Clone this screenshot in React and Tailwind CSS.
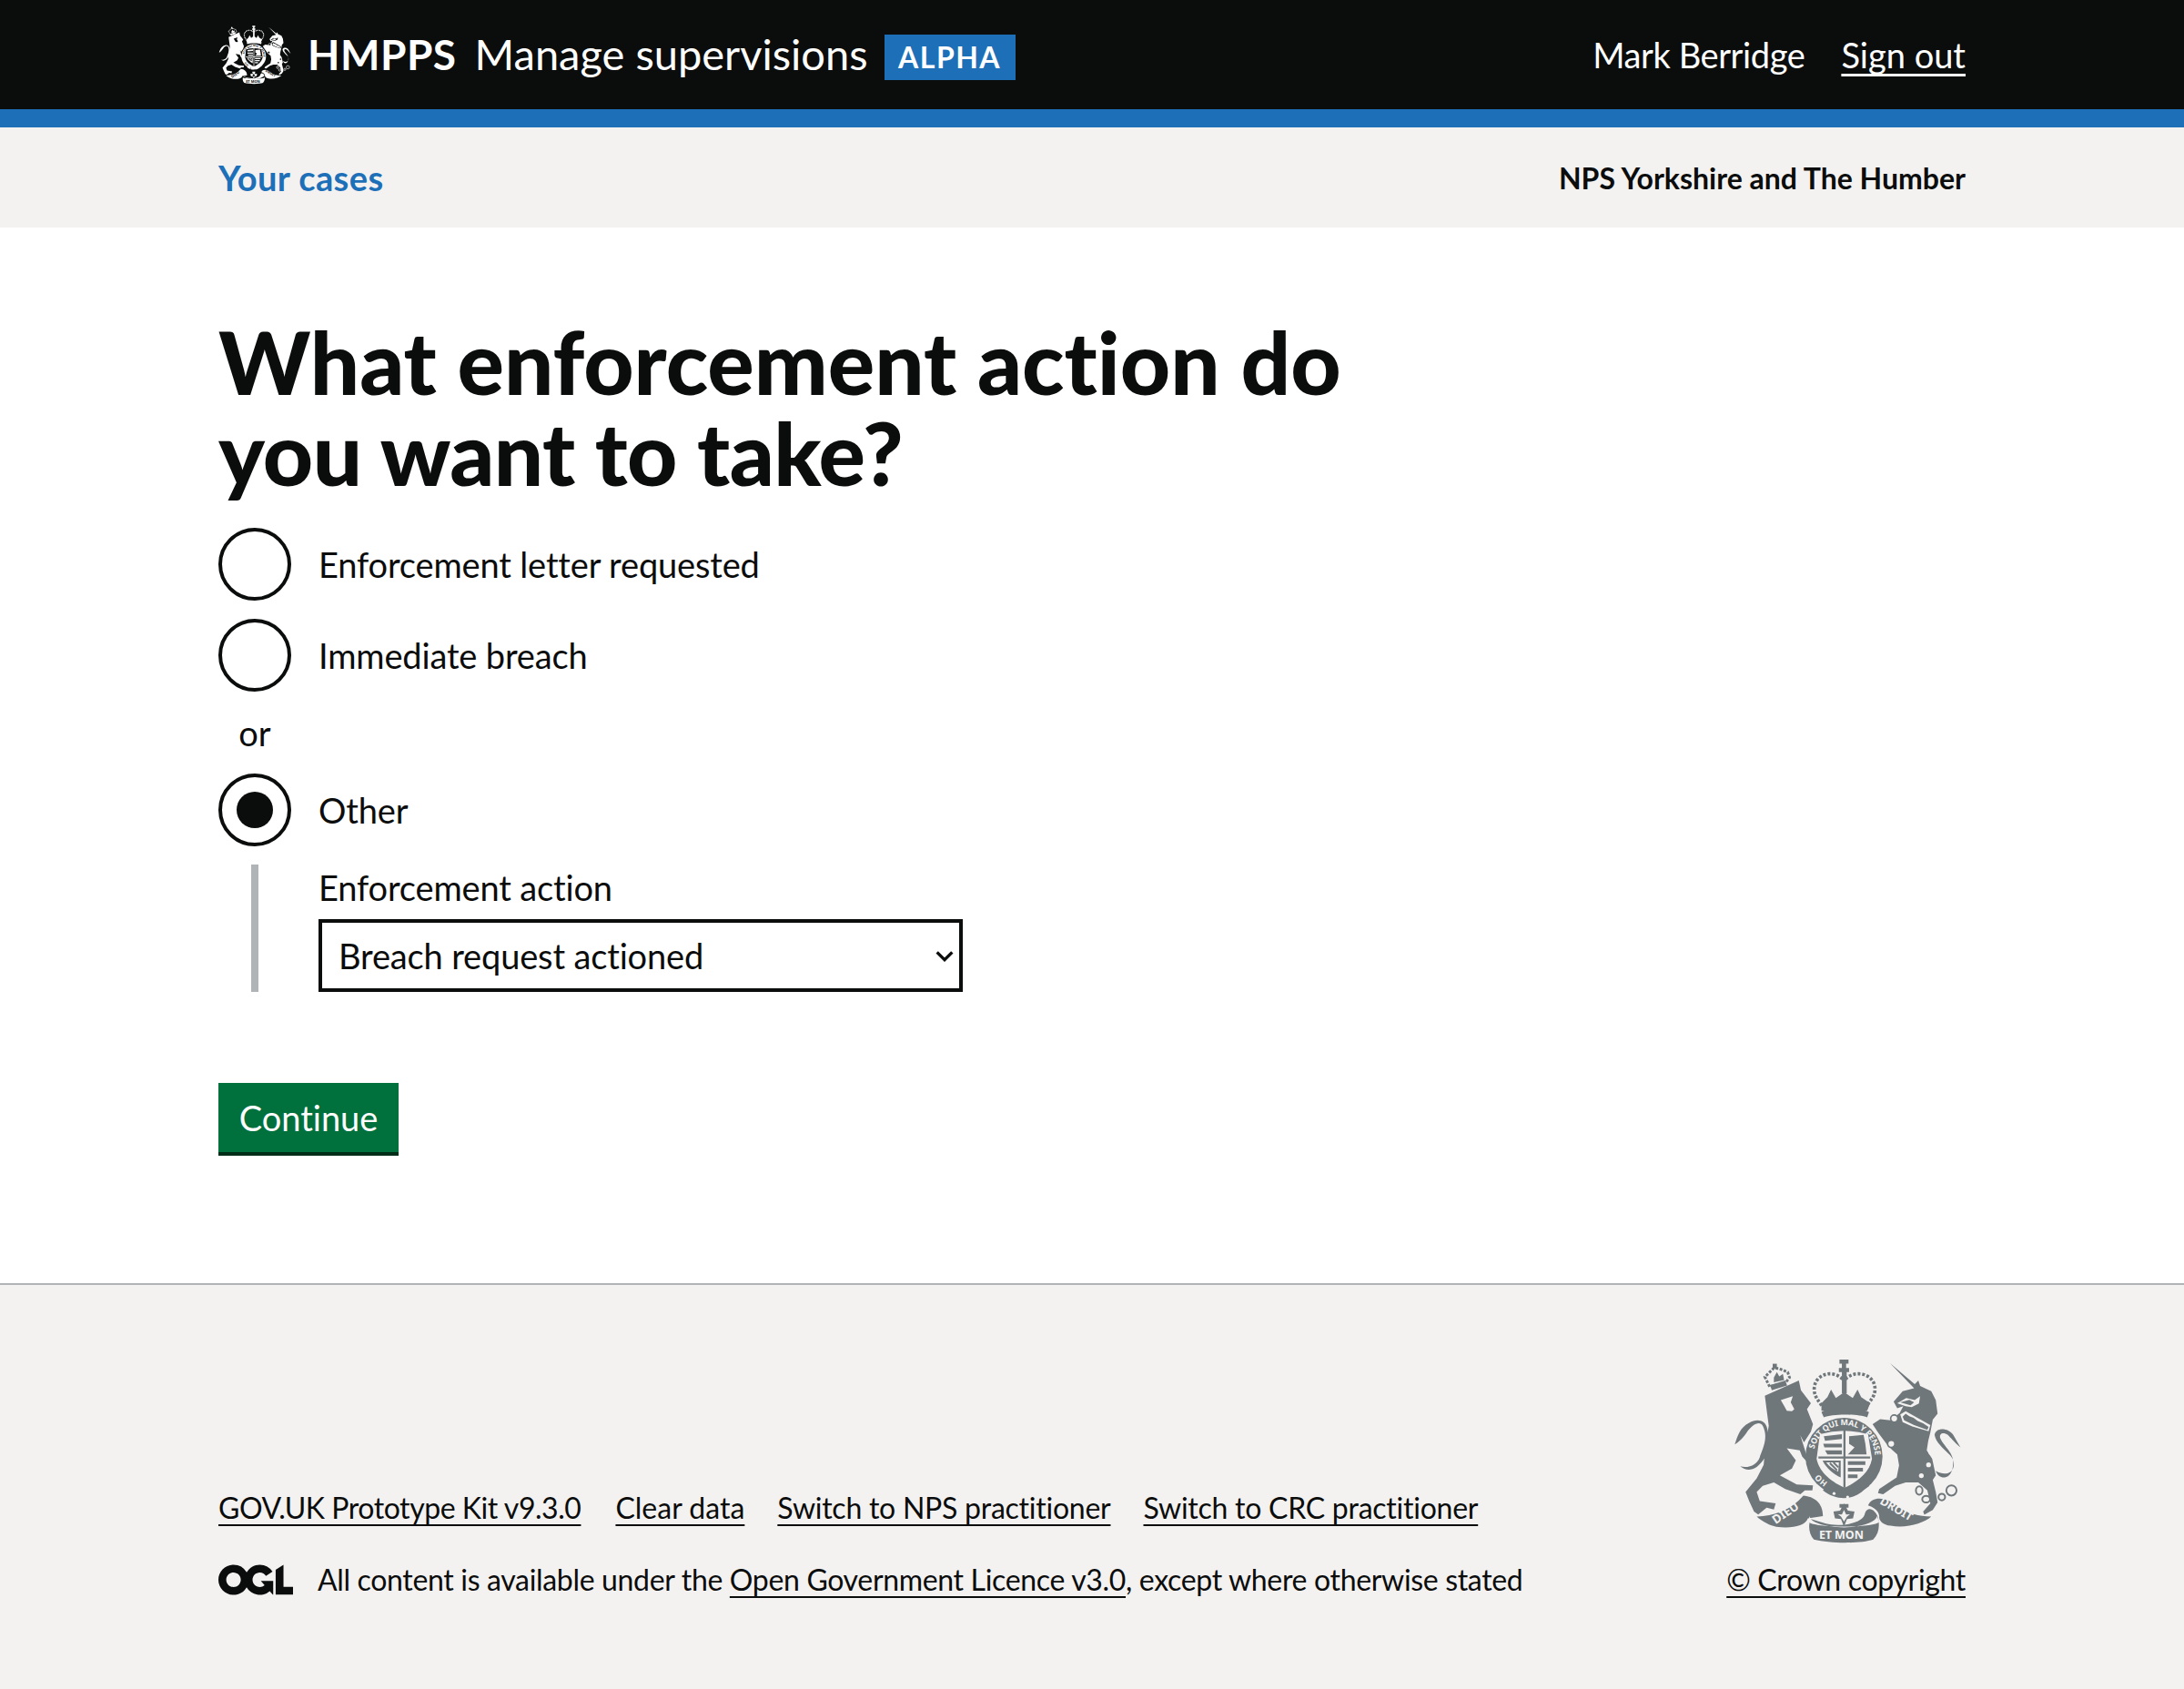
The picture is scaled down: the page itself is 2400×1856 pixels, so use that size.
import React from "react";

function Crest({ fg, bg, className }) {
  const id = fg === "#ffffff" ? "w" : "g";
  return (
    <svg viewBox="125 60 762 625" className={className} fill={fg}>
      <defs>
        <path id={`garterArc${id}`} d="M396 368 A102 102 0 1 1 568 462" />
        <path id={`honiArc${id}`} d="M441 478 A102 102 0 0 1 396 420" />
      </defs>
      {/* lion */}
      <path d="M232 190 L345 140 L352 172 L385 215 L372 235 L392 285 L385 310 L362 345 L350 322 L372 392 L408 420 L392 432 L356 392 L348 372 L305 365 L335 405 L322 432 L282 455 L338 485 L392 488 L390 505 L365 505 L350 518 L300 500 L262 478 L225 490 L205 510 L215 540 L268 548 L262 568 L238 562 L210 585 L196 575 L180 540 L168 510 L205 465 L228 420 L235 350 L245 290 L240 252 Z" />
      <path d="M235 392 C205 440 175 445 150 425 C180 432 205 420 215 395 C225 365 245 330 225 290 C215 272 190 285 172 312 C160 330 145 345 132 352 C142 322 150 295 180 280 C205 265 235 270 240 300 C250 335 240 370 235 392 Z" />
      <path d="M285 205 L325 192 L318 212 L330 235 L322 242 L305 240 L295 222 Z" fill={bg} />
      <circle cx="314" cy="228" r="9" fill={bg} />
      {/* lion crown */}
      <path d="M248 160 L232 128 L246 114 L262 98 L280 100 L308 112 L314 130 L300 148 Z" fill="none" stroke={fg} strokeWidth="9" strokeDasharray="9 5" />
      <path d="M250 155 L300 140 L306 156 L255 172 Z" />
      <path d="M258 100 h14 v-16 h-14 z" />
      <path d="M262 130 L272 112 L280 126 L292 118 L296 138 L262 146 Z" />
      {/* crown */}
      <path d="M480 70 h30 v14 h-8 v14 h10 v14 h-34 v-14 h10 v-14 h-8 z M488 112 h16 v70 h-16 z" />
      <path d="M490 135 C455 100 395 120 396 170 C397 195 410 205 422 225" fill="none" stroke={fg} strokeWidth="11" strokeDasharray="9 6" />
      <path d="M500 135 C535 100 600 120 598 170 C597 195 582 205 570 225" fill="none" stroke={fg} strokeWidth="11" strokeDasharray="9 6" />
      <path d="M420 215 L440 195 L452 170 L468 198 L496 178 L524 198 L540 170 L552 195 L582 215 L572 240 L420 240 Z" />
      <path d="M420 245 C450 225 545 225 578 245 L572 262 C540 250 455 250 428 262 Z" />
      {/* garter ring and shield */}
      <circle cx="495" cy="392" r="128" />
      <path d="M415 318 Q495 296 575 318 L588 400 C580 450 532 480 497 496 C460 480 414 450 404 400 Z" fill={bg} />
      <path d="M493 300 h7 v196 h-7 z M410 392 h172 v7 h-172 z" />
      <path d="M428 325 L488 318 V334 L432 340 Z M426 350 H488 V362 H430 Z M432 372 H488 V385 H440 Z" />
      <path d="M512 325 L560 320 L566 350 L570 385 H508 L530 362 L512 350 Z" />
      <path d="M424 406 H484 V462 C462 452 436 432 424 406 Z" />
      <path d="M436 412 L478 412 L476 442 C460 436 446 426 436 412 Z" fill={bg} />
      <path d="M448 414 L472 438 M460 412 L476 428" stroke={fg} strokeWidth="6" />
      <path d="M508 408 H566 V420 H508 Z M508 430 H558 V442 H508 Z M508 452 H540 V464 H508 Z" />
      <text fontFamily="'Noto Sans', sans-serif" fontWeight="700" fontSize="27" fill={bg}>
        <textPath href={`#garterArc${id}`}>SOIT QUI MAL Y PENSE</textPath>
      </text>
      <text fontFamily="'Noto Sans', sans-serif" fontWeight="700" fontSize="27" fill={bg}>
        <textPath href={`#honiArc${id}`}>HO</textPath>
      </text>
      <path d="M425 505 C470 540 525 540 565 500 L580 490 L570 480 C525 525 470 525 435 490 Z" />
      <circle cx="462" cy="515" r="5" fill={bg} />
      <circle cx="507" cy="527" r="5" fill={bg} />
      {/* unicorn */}
      <path d="M648 82 L730 152 L742 140 L748 158 L785 175 L800 205 L806 250 L790 270 L782 312 L775 340 L770 372 L788 400 L800 455 L790 470 L800 510 L806 545 L790 570 L762 586 L758 575 L782 548 L772 505 L742 478 L700 478 L665 490 L625 518 L608 514 L612 500 L670 462 L678 422 L672 385 L655 370 L640 355 L610 315 L590 285 L615 268 L650 272 L680 248 L692 225 L672 232 L660 210 L690 175 L728 165 Z" />
      <path d="M682 252 L700 242 L782 288 L776 308 L722 292 L690 278 Z" fill={bg} />
      <path d="M690 260 L700 250 L712 258 L726 264 L740 274 L758 282 L776 294 L772 304 L728 288 L695 272 Z" />
      <path d="M672 215 L702 198 L730 205 L748 192 L744 216 L720 228 L700 225 Z" fill={bg} />
      <path d="M682 212 L712 204 L728 212 L716 222 Z" />
      <circle cx="662" cy="266" r="12" fill={bg} stroke={fg} strokeWidth="5" />
      <circle cx="652" cy="350" r="12" fill={bg} stroke={fg} strokeWidth="5" />
      <circle cx="786" cy="376" r="11" fill={bg} />
      <circle cx="776" cy="420" r="8" fill={bg} />
      <circle cx="752" cy="456" r="8" fill={bg} />
      <path d="M800 440 C850 470 880 420 845 385 C825 365 800 345 796 320 C800 295 840 295 858 320 L882 362 C860 342 850 330 840 320 C825 310 810 315 815 332 C830 365 870 385 855 435 C845 470 810 470 800 440 Z" />
      <g fill="none" stroke={fg} strokeWidth="6">
        <ellipse cx="745" cy="505" rx="11" ry="14" />
        <ellipse cx="768" cy="534" rx="13" ry="11" />
        <ellipse cx="820" cy="527" rx="11" ry="11" />
        <circle cx="852" cy="505" r="17" />
      </g>
      {/* motto ribbon */}
      <path d="M205 592 C260 590 320 570 360 522 C395 525 425 545 425 590 L375 598 C365 625 320 632 270 626 C250 622 225 610 205 592 Z" />
      <path d="M385 600 C375 620 378 650 395 668 C450 682 550 682 592 668 C610 650 615 625 608 595 C600 570 575 555 565 580 C560 620 470 625 435 615 Z" />
      <path d="M575 555 C590 520 640 530 670 555 C705 585 745 590 785 592 C760 615 700 632 650 622 C625 620 610 605 612 590 C610 570 590 560 575 555 Z" />
      <path d="M380 590 C385 612 430 625 495 628 C560 625 600 610 605 590 L612 610 C595 630 395 630 378 610 Z" fill={bg} />
      <path d="M495 548 L508 572 L530 575 L525 598 L505 600 L495 625 L485 600 L465 598 L460 575 L482 572 Z M480 550 h30 v12 h-30 z" />
      <path d="M495 570 L502 585 L515 584 L505 592 L495 608 L485 592 L475 584 L488 585 Z" fill={bg} />
      <g fontFamily="'Noto Sans', sans-serif" fontWeight="700" fontSize="40" fill={bg}>
        <text x="268" y="618" transform="rotate(-34 268 618)">DIEU</text>
        <text x="412" y="667" fontSize="38">ET MON</text>
        <text x="612" y="548" fontSize="38" transform="rotate(30 612 548)">DROIT</text>
      </g>
    </svg>
  );
}

function Ogl({ className }) {
  return (
    <svg viewBox="0 0 483.2 195.7" className={className} fill="#0b0c0c">
      <path d="M421.5 142.8V.1l-50.7 32.3v161.1h112.4v-50.7zm-122.3-9.6A47.12 47.12 0 0 1 221 97.8c0-26 21.1-47.1 47.1-47.1 16.7 0 31.4 8.7 39.7 21.8l42.7-27.2A97.63 97.63 0 0 0 268.1 0c-36.5 0-68.3 20.1-85.1 49.7A98 98 0 0 0 97.8 0C43.9 0 0 43.9 0 97.8s43.9 97.8 97.8 97.8c36.5 0 68.3-20.1 85.1-49.7a97.76 97.76 0 0 0 149.6 25.4l19.4 22.2h3v-87.8h-80l24.3 27.5zM97.8 145c-26 0-47.1-21.1-47.1-47.1s21.1-47.1 47.1-47.1 47.2 21 47.2 47S123.8 145 97.8 145" />
    </svg>
  );
}

function Radio({ checked, children }) {
  return (
    <div className="flex h-[80px] items-center gap-[30px]">
      <div className="flex h-[80px] w-[80px] items-center justify-center rounded-full border-4 border-[#0b0c0c] bg-white">
        {checked && <div className="h-[40px] w-[40px] rounded-full bg-[#0b0c0c]" />}
      </div>
      <span className="tracking-[-0.15px]">{children}</span>
    </div>
  );
}

function FooterLink({ children, className = "" }) {
  return (
    <a href="#" className={`text-[#0b0c0c] underline decoration-[2px] underline-offset-[6px] [text-decoration-skip-ink:none] ${className}`}>
      {children}
    </a>
  );
}

export default function App() {
  return (
    <div className="min-h-[1856px] bg-white font-['Lato',sans-serif] text-[38px] leading-[50px] text-[#0b0c0c] [font-variant-ligatures:none]">
      <header className="h-[140px] border-b-[20px] border-[#1d70b8] bg-[#0b0c0c] text-white">
        <div className="mx-auto flex h-[120px] w-[1920px] items-center justify-between">
          <div className="flex items-center">
            <Crest fg="#ffffff" bg="#0b0c0c" className="h-[68px] w-[80px]" />
            <span className="ml-[18px] text-[46px] font-bold leading-[60px] tracking-[0.5px]">HMPPS</span>
            <span className="mb-[2px] ml-[20px] text-[47px] leading-[60px]">Manage supervisions</span>
            <span className="ml-[18px] mt-[6px] flex h-[50px] w-[144px] items-center justify-center bg-[#1d70b8] text-[32px] font-bold leading-[40px] tracking-[1.5px]">ALPHA</span>
          </div>
          <div className="flex items-center gap-[40px]">
            <span className="tracking-[-0.4px]">Mark Berridge</span>
            <a href="#" className="text-white underline decoration-[3px] underline-offset-[6px] [text-decoration-skip-ink:none]">Sign out</a>
          </div>
        </div>
      </header>

      <nav className="h-[110px] bg-[#f3f2f1]">
        <div className="mx-auto flex h-full w-[1920px] items-center justify-between">
          <a href="#" className="font-bold tracking-[0.4px] text-[#1d70b8]">Your cases</a>
          <span className="mt-[2px] text-[32px] font-bold">NPS Yorkshire and The Humber</span>
        </div>
      </nav>

      <main className="mx-auto w-[1920px] pt-[97px]">
        <h1 className="mb-[33px] text-[96px] font-black leading-[100px]">
          What enforcement action do
          <br />
          <span className="tracking-[-0.6px]">you want to take?</span>
        </h1>
        <div className="flex flex-col gap-[20px]">
          <Radio>Enforcement letter requested</Radio>
          <Radio>Immediate breach</Radio>
          <div className="w-[80px] text-center">or</div>
          <Radio checked>Other</Radio>
          <div className="ml-[36px] border-l-[8px] border-[#b1b4b6] pl-[66px]">
            <label className="mb-[10px] block tracking-[-0.15px]">Enforcement action</label>
            <div className="relative w-[708px]">
              <select defaultValue="b" className="h-[80px] w-full appearance-none border-4 border-[#0b0c0c] bg-white pl-[18px] text-[38px] tracking-[-0.15px]">
                <option value="b">Breach request actioned</option>
              </select>
              <svg viewBox="0 0 24 14" className="pointer-events-none absolute right-[10px] top-[34px] h-[13px] w-[20px]" fill="none" stroke="#0b0c0c" strokeWidth="4">
                <path d="M2 2 L12 12 L22 2" />
              </svg>
            </div>
          </div>
        </div>
        <button className="mt-[100px] flex h-[80px] w-[198px] items-center justify-center border-b-[4px] border-[#002d18] bg-[#00703c] text-white">
          Continue
        </button>
      </main>

      <footer className="mt-[140px] h-[446px] border-t-2 border-[#b1b4b6] bg-[#f3f2f1] text-[32px] leading-[40px] tracking-[-0.33px]">
        <div className="mx-auto flex h-full w-[1920px] items-end justify-between pb-[100px]">
          <div>
            <div className="mb-[39px] flex gap-[36px]">
              <FooterLink className="mr-[2px] tracking-[-0.45px]">GOV.UK Prototype Kit v9.3.0</FooterLink>
              <FooterLink className="tracking-[0px]">Clear data</FooterLink>
              <FooterLink className="tracking-[-0.25px]">Switch to NPS practitioner</FooterLink>
              <FooterLink className="tracking-[-0.25px]">Switch to CRC practitioner</FooterLink>
            </div>
            <div className="flex items-center gap-[27px]">
              <Ogl className="h-[34px] w-[82px]" />
              <span>
                All content is available under the <FooterLink>Open Government Licence v3.0</FooterLink>, except where otherwise stated
              </span>
            </div>
          </div>
          <div className="flex flex-col items-end">
            <Crest fg="#6f777b" bg="#f3f2f1" className="mb-[18px] mr-[4px] h-[208px] w-[252px]" />
            <FooterLink>© Crown copyright</FooterLink>
          </div>
        </div>
      </footer>
    </div>
  );
}
